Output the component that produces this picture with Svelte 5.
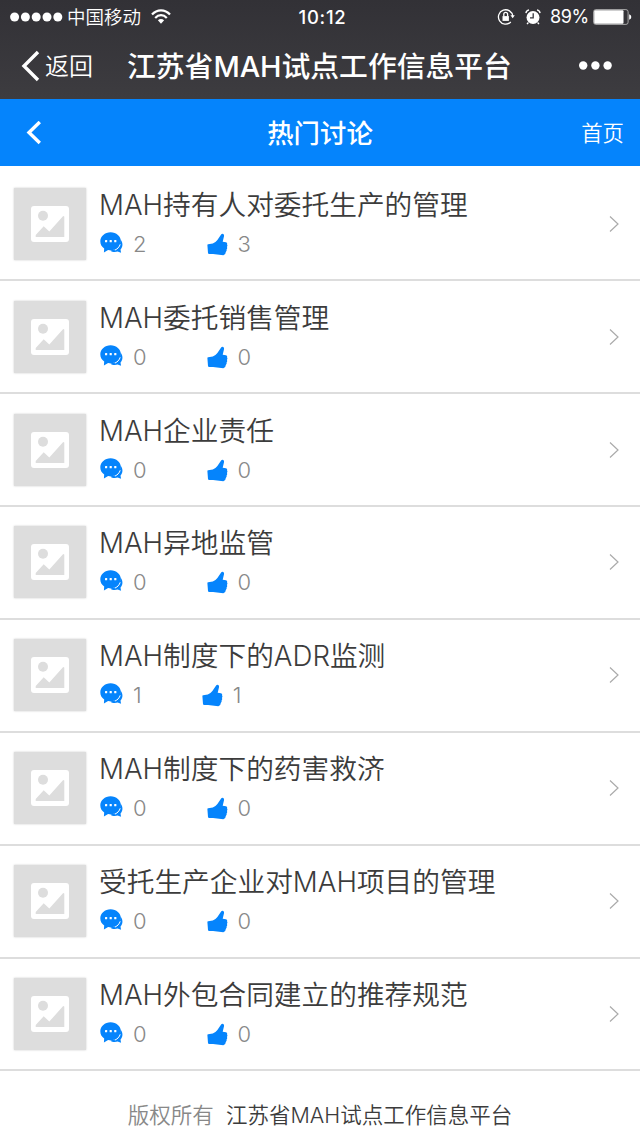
<script>
  const topics = [
    { title: 'MAH持有人对委托生产的管理', comments: 2, likes: 3 },
    { title: 'MAH委托销售管理', comments: 0, likes: 0 },
    { title: 'MAH企业责任', comments: 0, likes: 0 },
    { title: 'MAH异地监管', comments: 0, likes: 0 },
    { title: 'MAH制度下的ADR监测', comments: 1, likes: 1 },
    { title: 'MAH制度下的药害救济', comments: 0, likes: 0 },
    { title: '受托生产企业对MAH项目的管理', comments: 0, likes: 0 },
    { title: 'MAH外包合同建立的推荐规范', comments: 0, likes: 0 }
  ];
</script>

<div class="page">
  <div class="chrome">
    <div class="status">
      <div class="carrier">
        <svg width="53" height="10" viewBox="0 0 53 10" fill="#fff">
          {#each [4.6, 15.4, 26.2, 37, 47.8] as x}
            <circle cx={x} cy="5" r="4.5" />
          {/each}
        </svg>
        <span>中国移动</span>
        <svg class="wifi" width="20" height="16" viewBox="0 0 20 16" fill="none" stroke="#fff" stroke-width="2.2">
          <path d="M1 5.5C6-.1 14-.1 19 5.5" />
          <path d="M4.2 8.9c3.4-3.6 8.2-3.6 11.6 0" />
          <path d="M6.9 11.3c1.9-1.8 4.3-1.8 6.2 0L10 14.8z" fill="#fff" stroke="none" />
        </svg>
      </div>
      <div class="time">10:12</div>
      <div class="power">
        <svg width="18" height="18" viewBox="0 0 18 18" fill="none" stroke="#fff" stroke-width="1.3">
          <path d="M15.8 8.2A7.2 7.2 0 1 0 13.8 14" />
          <path d="M13.4 7.3h4.4l-2.1 3z" fill="#fff" stroke="none" />
          <path d="M5.5 8.1h6.4v4.8H5.5z" fill="#fff" stroke="none" />
          <path d="M6.8 8.4V6.3a1.9 1.9 0 0 1 3.8 0v2.1" />
        </svg>
        <svg class="alarm" width="16" height="16" viewBox="0 0 16 16">
          <circle cx="8" cy="8.5" r="6.5" fill="#fff" />
          <path d="M.9 4.1Q1.3 1.5 4 .9M15.1 4.1Q14.7 1.5 12 .9M3.4 13.5l-1.4 1.7M12.6 13.5l1.4 1.7" fill="none" stroke="#fff" stroke-width="1.3" />
          <path d="M8.2 4.2v4.7H5" fill="none" stroke="#38373c" stroke-width="1.3" />
        </svg>
        <span>89%</span>
        <svg width="39" height="16" viewBox="0 0 39 16">
          <rect x=".6" y=".6" width="34.5" height="14.8" rx="2.2" fill="none" stroke="#aaa" />
          <rect x="1.2" y="1.2" width="29.3" height="13.6" rx="1" fill="#fff" />
          <path d="M36.2 5.2q2.1.6 2.1 2.8t-2.1 2.8z" fill="#fff" />
        </svg>
      </div>
    </div>
    <div class="wechat">
      <svg width="19" height="32" viewBox="0 0 19 32" fill="none" stroke="#fff" stroke-width="3.4">
        <path d="M17 2L3 16l14 14" />
      </svg>
      <span class="return">返回</span>
      <span class="site">江苏省MAH试点工作信息平台</span>
      <svg class="more" width="34" height="10" viewBox="0 0 34 10" fill="#fff">
        <circle cx="4.2" cy="4.5" r="4.2" />
        <circle cx="16.4" cy="4.5" r="4.2" />
        <circle cx="28.6" cy="4.5" r="4.2" />
      </svg>
    </div>
  </div>

  <header>
    <svg width="16" height="24" viewBox="0 0 16 24" fill="none" stroke="#fff" stroke-width="3.4">
      <path d="M14.8 1L4 11.5 14.8 22" />
    </svg>
    <h1>热门讨论</h1>
    <a href="#home">首页</a>
  </header>

  <ul>
    {#each topics as topic}
      <li>
        <div class="thumb">
          <svg width="38" height="36" viewBox="0 0 38 36">
            <rect width="38" height="36" rx="3" fill="#fff" />
            <circle cx="12" cy="9.8" r="5" fill="#ddd" />
            <path d="M4.7 31v-2l8-8.7 5.6 5.3L32.2 10l1.1.4V31z" fill="#ddd" />
          </svg>
        </div>
        <div class="info">
          <h2>{topic.title}</h2>
          <div class="counts">
            <svg width="23" height="22" viewBox="0 0 23 22">
              <path d="M20.6 7.5c1.8 2.3 2.5 5.7 1.1 8.2-.5 1-1.2 1.6-1.2 2.1l.6 3-3.5-1.3c-2.7.9-5.5.5-7.4-1.1 6 .1 10.7-4.2 10.4-10.9z" fill="#0584fc" />
              <path d="M10.6.2C4.9.2.3 4.2.3 9.3c0 3 1.4 5.6 3.9 7.3l-.3 3.9 4.2-2.5c7.1 1.5 12.8-3 12.8-8.7 0-5.1-4.6-9.1-10.3-9.1z" fill="#0584fc" />
              <path d="M20.2 12.3c-.8 2.7-2.7 4.8-5.3 5.8" fill="none" stroke="#fff" stroke-width="1" />
              <g fill="#fff">
                <rect x="5" y="8.1" width="2.2" height="2.2" rx=".5" />
                <rect x="9.6" y="8.1" width="2.2" height="2.2" rx=".5" />
                <rect x="14.2" y="8.1" width="2.2" height="2.2" rx=".5" />
              </g>
            </svg>
            <span class="num">{topic.comments}</span>
            <svg class="like" width="21" height="23" viewBox="0 0 21 23" fill="#0584fc">
              <path d="M.4 12.3Q.2 11.3 1.2 11.2L5.8 10.5Q8.5 9.7 10.4 7.1L14.3 1.2Q15.2.2 16.3 1 17.4 1.8 17 3.2L15.7 8.8 19 9.3Q20.7 9.8 20.1 11.6 20.9 12.5 20 14 20.7 15.3 19.6 16.5 20 18 18.8 18.9 18.8 21.5 16.3 22.3L6 21.1 2.2 21Q1.1 21 1 19.9z" />
            </svg>
            <span class="num">{topic.likes}</span>
          </div>
        </div>
        <svg class="arrow" width="11" height="18" viewBox="0 0 11 18" fill="none" stroke="#aaa" stroke-width="1.2">
          <path d="M1 1.5L9 9l-8 7.5" />
        </svg>
      </li>
    {/each}
  </ul>

  <footer><span>版权所有</span>江苏省MAH试点工作信息平台</footer>
</div>

<style>
  :global(body) {
    background: #fff;
  }

  .page {
    width: 640px;
    height: 1138px;
    overflow: hidden;
    font-family: Inter, "Noto Sans CJK SC", sans-serif;
    color: #3c3c3c;
  }

  svg {
    display: block;
    flex: none;
  }

  .chrome {
    height: 99px;
    color: #fff;
    background: linear-gradient(#323136, #3d3c40);
  }

  .status {
    display: grid;
    grid-template-columns: 1fr auto 1fr;
    align-items: center;
    height: 32px;
    padding: 0 8px 0 10px;
    font-size: 18.5px;
    line-height: 32px;
  }

  .carrier,
  .power {
    display: flex;
    align-items: center;
  }

  .carrier span {
    margin: 0 10px 0 4px;
    font-weight: 350;
  }

  .time {
    margin-left: 3px;
    font-weight: 500;
    letter-spacing: 0.7px;
  }

  .power {
    justify-content: flex-end;
  }

  .alarm {
    margin: 0 9px 0 10px;
  }

  .power span {
    margin: 1px 4px 0 0;
    font-size: 18px;
    letter-spacing: -0.3px;
  }

  .wechat {
    display: flex;
    align-items: center;
    height: 67px;
    padding: 0 27px 0 21px;
  }

  .return {
    margin: 0 0 2px 5px;
    font-size: 24px;
    font-weight: 350;
  }

  .site {
    margin: 0 0 3px 34px;
    font-size: 28.8px;
    font-weight: 500;
    white-space: nowrap;
  }

  .more {
    margin-left: auto;
  }

  header {
    display: grid;
    grid-template-columns: 1fr auto 1fr;
    align-items: center;
    height: 67px;
    padding: 0 16px 0 25px;
    background: #0584fc;
    color: #fff;
  }

  h1 {
    margin: 0 9px 2px 0;
    font-size: 26.4px;
    font-weight: 500;
  }

  header a {
    justify-self: end;
    margin-bottom: 2px;
    color: #fff;
    font-size: 21.4px;
    font-weight: 350;
    text-decoration: none;
  }

  ul {
    margin: 0;
    padding: 2.3px 0 0;
    list-style: none;
  }

  li {
    display: flex;
    align-items: center;
    box-sizing: border-box;
    height: 112.9px;
    padding: 0 20px 0 14px;
    border-bottom: 2px solid #ddd;
  }

  .thumb {
    display: flex;
    align-items: center;
    justify-content: center;
    width: 72px;
    height: 72px;
    background: #ddd;
    box-shadow: 0 0 2px #ccc;
  }

  .info {
    flex: 1;
    height: 72px;
    margin-left: 13px;
  }

  h2 {
    margin: 0;
    height: 44px;
    font-size: 27.7px;
    font-weight: 350;
    line-height: 35px;
    white-space: nowrap;
  }

  .counts {
    display: flex;
    align-items: center;
    height: 24px;
    margin-left: 1px;
    color: #888;
    font-size: 22px;
    font-weight: 300;
  }

  .counts svg:first-child {
    margin-bottom: 2px;
  }

  .num {
    margin-left: 10px;
  }

  .like {
    margin: 1px 0 0 60px;
  }

  footer {
    display: flex;
    justify-content: center;
    padding-top: 29px;
    font-size: 21.5px;
    font-weight: 350;
    line-height: 30px;
  }

  footer span {
    margin-right: 12px;
    color: #888;
  }
</style>
